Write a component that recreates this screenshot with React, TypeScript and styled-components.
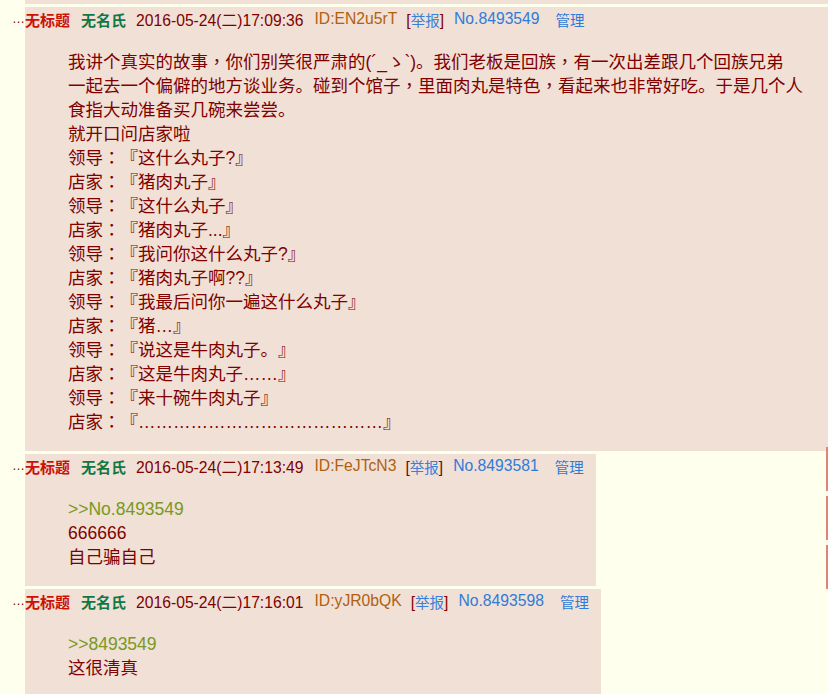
import styled, { createGlobalStyle } from "styled-components";

const GlobalStyle = createGlobalStyle`
  html, body {
    margin: 0;
    padding: 0;
    background: #ffffee;
    overflow: hidden;
  }
  body {
    font-family: "Liberation Sans", "Noto Sans CJK SC", sans-serif;
    color: #800000;
    text-spacing-trim: space-all;
    text-autospace: no-autospace;
  }
`;

type Post = {
  time: string;
  uid: string;
  no: string;
  lines: { text: string; quote?: boolean }[];
  full?: boolean;
};

const posts: Post[] = [
  {
    time: "2016-05-24(二)17:09:36",
    uid: "EN2u5rT",
    no: "8493549",
    full: true,
    lines: [
      { text: "我讲个真实的故事，你们别笑很严肃的(´_ゝ`)。我们老板是回族，有一次出差跟几个回族兄弟" },
      { text: "一起去一个偏僻的地方谈业务。碰到个馆子，里面肉丸是特色，看起来也非常好吃。于是几个人" },
      { text: "食指大动准备买几碗来尝尝。" },
      { text: "就开口问店家啦" },
      { text: "领导：『这什么丸子?』" },
      { text: "店家：『猪肉丸子』" },
      { text: "领导：『这什么丸子』" },
      { text: "店家：『猪肉丸子...』" },
      { text: "领导：『我问你这什么丸子?』" },
      { text: "店家：『猪肉丸子啊??』" },
      { text: "领导：『我最后问你一遍这什么丸子』" },
      { text: "店家：『猪…』" },
      { text: "领导：『说这是牛肉丸子。』" },
      { text: "店家：『这是牛肉丸子……』" },
      { text: "领导：『来十碗牛肉丸子』" },
      { text: "店家：『……………………………………』" },
    ],
  },
  {
    time: "2016-05-24(二)17:13:49",
    uid: "FeJTcN3",
    no: "8493581",
    lines: [
      { text: ">>No.8493549", quote: true },
      { text: "666666" },
      { text: "自己骗自己" },
    ],
  },
  {
    time: "2016-05-24(二)17:16:01",
    uid: "yJR0bQK",
    no: "8493598",
    lines: [
      { text: ">>8493549", quote: true },
      { text: "这很清真" },
    ],
  },
];

// full-width ， and ： sit centred in the reference, as in the TC glyphs
const renderText = (text: string) =>
  text.split(/([，：])/).map((part, i) =>
    part === "，" || part === "：" ? <Punct key={i}>{part}</Punct> : part
  );

const App = () => {
  return (
    <>
      <GlobalStyle />
      <Page>
        <PrevRow>
          <Gutter />
          <PrevTail />
        </PrevRow>
        {posts.map((post) => (
          <Row key={post.no}>
            <Gutter>…</Gutter>
            <Reply $full={post.full}>
              <Header>
                <Title>无标题</Title>
                <Name>无名氏</Name>
                <Time>{post.time}</Time>
                <Uid>ID:{post.uid}</Uid>
                <Report>
                  [<ReportLink>举报</ReportLink>]
                </Report>
                <PostNo>No.{post.no}</PostNo>
                <Admin>管理</Admin>
              </Header>
              <Content>
                {post.lines.map((line, i) => (
                  <Line key={i} $quote={line.quote}>
                    {renderText(line.text)}
                  </Line>
                ))}
              </Content>
            </Reply>
          </Row>
        ))}
      </Page>
      <SideMarks>
        <Mark />
        <Mark />
        <Mark />
      </SideMarks>
    </>
  );
};

const Page = styled.div`
  display: flex;
  flex-direction: column;
  gap: 3px;
  width: 828px;
`;

const PrevRow = styled.div`
  display: flex;
  height: 4px;
`;

const PrevTail = styled.div`
  flex: 1;
  background: #f0e0d6;
`;

const Row = styled.div`
  display: flex;
  align-items: flex-start;
`;

const Gutter = styled.div`
  width: 25px;
  flex-shrink: 0;
  text-align: right;
  font-size: 13px;
  line-height: 24px;
  color: #800000;
`;

const Reply = styled.div<{ $full?: boolean }>`
  background: #f0e0d6;
  padding: 0 12px 17px 0;
  ${(p) => (p.$full ? "flex: 1;" : "width: fit-content;")}
`;

const Header = styled.div`
  display: flex;
  align-items: center;
  height: 24px;
  font-size: 15.7px;
  white-space: nowrap;
`;

const Title = styled.span`
  color: #cc1105;
  font-weight: bold;
  font-size: 15px;
`;

const Name = styled.span`
  color: #117743;
  font-weight: bold;
  font-size: 15px;
  margin-left: 11px;
`;

const Time = styled.span`
  color: #800000;
  margin-left: 10px;
`;

const Uid = styled.span`
  color: #b0600e;
  margin-left: 11px;
`;

const Report = styled.span`
  color: #800000;
  margin-left: 9px;
`;

const ReportLink = styled.span`
  color: #3a7fd8;
  font-size: 14.5px;
`;

const PostNo = styled.span`
  color: #2f7bd9;
  margin-left: 10px;
`;

const Admin = styled.span`
  color: #2f7bd9;
  font-size: 14.5px;
  margin-left: 16px;
`;

const Content = styled.div`
  margin-top: 19px;
  padding-left: 43px;
  font-size: 17.5px;
  line-height: 24px;
`;

const Line = styled.div<{ $quote?: boolean }>`
  white-space: nowrap;
  color: ${(p) => (p.$quote ? "#789922" : "#800000")};
`;

const Punct = styled.span`
  font-family: "Liberation Sans", "Noto Sans CJK TC", sans-serif;
`;

const SideMarks = styled.div`
  position: fixed;
  right: 0;
  top: 447px;
  display: flex;
  flex-direction: column;
  gap: 5px;
`;

const Mark = styled.div`
  width: 2px;
  height: 44px;
  background: #e08575;
`;

export default App;
